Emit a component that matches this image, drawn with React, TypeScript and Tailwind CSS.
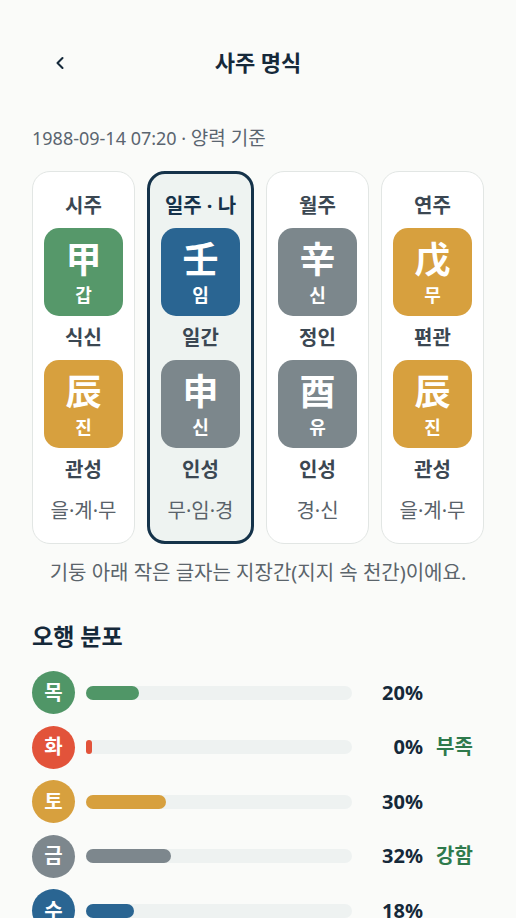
import { ChevronLeft } from "lucide-react";

type Pillar = {
  title: string;
  stem: { hanja: string; kor: string; color: string };
  stemGod: string;
  branch: { hanja: string; kor: string; color: string };
  branchGod: string;
  hidden: string;
  me?: boolean;
};

const GREEN = "bg-[#56986a]";
const BLUE = "bg-[#2a6592]";
const GRAY = "bg-[#7c878c]";
const EARTH = "bg-[#d7a03e]";

const pillars: Pillar[] = [
  {
    title: "시주",
    stem: { hanja: "甲", kor: "갑", color: GREEN },
    stemGod: "식신",
    branch: { hanja: "辰", kor: "진", color: EARTH },
    branchGod: "관성",
    hidden: "을·계·무",
  },
  {
    title: "일주 · 나",
    stem: { hanja: "壬", kor: "임", color: BLUE },
    stemGod: "일간",
    branch: { hanja: "申", kor: "신", color: GRAY },
    branchGod: "인성",
    hidden: "무·임·경",
    me: true,
  },
  {
    title: "월주",
    stem: { hanja: "辛", kor: "신", color: GRAY },
    stemGod: "정인",
    branch: { hanja: "酉", kor: "유", color: GRAY },
    branchGod: "인성",
    hidden: "경·신",
  },
  {
    title: "연주",
    stem: { hanja: "戊", kor: "무", color: EARTH },
    stemGod: "편관",
    branch: { hanja: "辰", kor: "진", color: EARTH },
    branchGod: "관성",
    hidden: "을·계·무",
  },
];

const elements = [
  { name: "목", pct: 20, color: "bg-[#509667]", note: "" },
  { name: "화", pct: 0, color: "bg-[#e2533a]", note: "부족" },
  { name: "토", pct: 30, color: "bg-[#d7a03e]", note: "" },
  { name: "금", pct: 32, color: "bg-[#7d878d]", note: "강함" },
  { name: "수", pct: 18, color: "bg-[#2a6592]", note: "" },
];

// 라틴 글자(숫자, 가운뎃점)는 Noto Sans, 한글/한자는 CJK 폰트로
const font = { fontFamily: '"Noto Sans", "Noto Sans CJK KR", sans-serif' };

function Tile({ hanja, kor, color }: { hanja: string; kor: string; color: string }) {
  return (
    <div className={`mx-auto w-[79px] h-[88px] rounded-[15px] ${color} flex flex-col items-center text-white`}>
      <span className="mt-[9px] text-[36px] font-bold leading-[46px]">{hanja}</span>
      <span className="mt-[1px] text-[18px] font-bold leading-[22px]">{kor}</span>
    </div>
  );
}

function PillarCard({ p }: { p: Pillar }) {
  const box = p.me
    ? "border-[3px] border-[#15334a] bg-[#eef3f1] pt-[19px] pb-[18px]"
    : "border border-[#e2e6e4] bg-white pt-[21px] pb-[20px]";
  return (
    <div className={`flex-1 rounded-[18px] ${box} flex flex-col items-center`}>
      <p className={`text-[20px] font-bold leading-[26px] ${p.me ? "text-[#16324a]" : "text-[#3b4752]"}`}>
        {p.title}
      </p>
      <div className="mt-[9px] w-full">
        <Tile {...p.stem} />
      </div>
      <p className="mt-[9px] text-[20px] font-bold leading-[26px] text-[#3b4752]">{p.stemGod}</p>
      <div className="mt-[9px] w-full">
        <Tile {...p.branch} />
      </div>
      <p className="mt-[9px] text-[20px] font-bold leading-[26px] text-[#3b4752]">{p.branchGod}</p>
      <p className="mt-[16px] text-[20px] leading-[24px] text-[#59626a]">{p.hidden}</p>
    </div>
  );
}

export default function App() {
  return (
    <div className="min-h-[918px] bg-[#fafbf9] px-8 text-[#15293a]" style={font}>
      {/* 헤더 */}
      <div className="relative pt-[44px] flex justify-center">
        <button className="absolute left-[18px] top-[53px] text-[#15293a]">
          <ChevronLeft className="w-[20px] h-[20px]" strokeWidth={2.5} />
        </button>
        <h1 className="text-[22px] font-bold leading-[36px]">사주 명식</h1>
      </div>

      <p className="mt-[46px] text-[18px] leading-[24px] text-[#5a6570]">
        1988-09-14 07:20 · <span className="text-[19px]">양력 기준</span>
      </p>

      <div className="mt-[21px] flex gap-[12px]">
        {pillars.map((p) => (
          <PillarCard key={p.title} p={p} />
        ))}
      </div>

      <p className="mt-[17px] text-center text-[20px] leading-[24px] text-[#5b646b] whitespace-nowrap">
        기둥 아래 작은 글자는 지장간(지지 속 천간)이에요.
      </p>

      <h2 className="mt-[37px] text-[23px] font-bold leading-[28px]">오행 분포</h2>

      <div className="mt-[21px] flex flex-col gap-[11.5px]">
        {elements.map((e) => (
          <div key={e.name} className="flex items-center">
            <div
              className={`w-[43px] h-[43px] shrink-0 rounded-full ${e.color} flex items-center justify-center text-white text-[20px] font-bold`}
            >
              {e.name}
            </div>
            <div className="ml-[11px] w-[266px] h-[14px] rounded-full bg-[#eef2f1]">
              <div className={`h-full rounded-full ${e.color}`} style={{ width: `${e.pct}%`, minWidth: 6 }} />
            </div>
            <span className="w-[71px] text-right text-[20px] font-bold leading-[26px] text-[#15293a]">{e.pct}%</span>
            <span className="ml-[13px] text-[20px] font-bold leading-[26px] text-[#2e7a4c]">{e.note}</span>
          </div>
        ))}
      </div>
    </div>
  );
}
